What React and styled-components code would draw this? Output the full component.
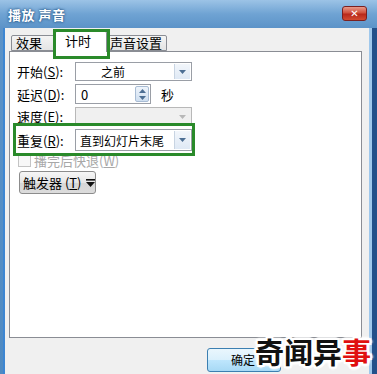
import React from "react"
import styled, { createGlobalStyle } from "styled-components"

const GlobalStyle = createGlobalStyle`
  html, body { margin: 0; padding: 0; }
  body {
    width: 377px;
    height: 374px;
    overflow: hidden;
    font-family: "Noto Sans CJK SC", "Noto Sans", sans-serif;
    font-size: 13px;
    line-height: 15px;
  }
`

const Window = styled.div`
  position: relative;
  width: 377px;
  height: 374px;
  display: flex;
  flex-direction: column;
  background: linear-gradient(180deg, #9cc3e6 0, #6fa3d3 14px, #5c93c8 28px, #4f8ac2 100%);
  overflow: hidden;
`

const TitleBar = styled.div`
  height: 28px;
  flex: none;
  display: flex;
  align-items: center;
  justify-content: space-between;
  padding: 0 10px 0 8px;
`

const Title = styled.span`
  color: #fff;
  font-weight: bold;
  font-size: 13px;
  letter-spacing: 0.5px;
  text-shadow: 0 0 3px #2b5a8a, 0 0 2px #2b5a8a;
`

const CloseButton = styled.div`
  width: 23px;
  height: 13px;
  border: 1px solid #7a2020;
  border-radius: 3px;
  background: linear-gradient(180deg, #e89a8a 0, #d0503c 45%, #b8281a 55%, #d24a30 100%);
  display: flex;
  align-items: center;
  justify-content: center;
  color: #fff;
  font: bold 10px "DejaVu Sans", sans-serif;
  line-height: 1;
  margin-top: -1px;
`

const Client = styled.div`
  flex: 1;
  display: flex;
  flex-direction: column;
  background: #f0f0f0;
  margin: 0 8px 0 5px;
  box-shadow: 3px 0 0 #9fc8ec, 8px 0 0 #23508a, -2px 0 0 #3d86d2;
  padding: 2px 7px 0 4px;
`

const TabRow = styled.div`
  height: 21px;
  flex: none;
  display: flex;
  align-items: flex-end;
  padding-left: 2px;
  position: relative;
  z-index: 2;
`

const Tab = styled.div`
  position: relative;
  box-sizing: border-box;
  height: ${p => (p.active ? "21px" : "16px")};
  padding: 0 ${p => (p.active ? "9px" : "4px")};
  margin: ${p => (p.active ? "0 -2px 0 0" : "0 0 0 0")};
  min-width: ${p => p.w}px;
  border: 1px solid #8a8d94;
  border-bottom: ${p => (p.active ? "none" : "1px solid #8a8d94")};
  border-radius: 2px 2px 0 0;
  background: ${p => (p.active ? "#fff" : "linear-gradient(180deg, #f4f4f4 0, #e4e4e4 100%)")};
  margin-bottom: ${p => (p.active ? "-1px" : "0")};
  font-size: 13px;
  line-height: ${p => (p.active ? "18px" : "14px")};
  color: #000;
  white-space: nowrap;
  z-index: ${p => (p.active ? 2 : 1)};

  ${p => p.active && `
    &::after {
      content: "";
      position: absolute;
      left: -3px;
      right: -4px;
      top: -3px;
      bottom: -7px;
      border: 3px solid #2a8a2a;
      pointer-events: none;
    }
  `}
`

const Panel = styled.div`
  box-sizing: border-box;
  height: 287px;
  flex: none;
  background: #fff;
  border: 1px solid #8a8d94;
  padding: 10px 0 0 7px;
  display: flex;
  flex-direction: column;
  align-items: flex-start;
  gap: 3px;
  position: relative;
  z-index: 1;
`

const Row = styled.div`
  position: relative;
  display: flex;
  align-items: center;
  height: ${p => p.h || 19}px;
  ${p => p.highlight && `
    &::after {
      content: "";
      position: absolute;
      left: -4px;
      right: -3px;
      top: -6px;
      bottom: -5px;
      border: 3px solid #2a8a2a;
      pointer-events: none;
      z-index: 3;
    }
  `}
`

const Label = styled.span`
  width: 58px;
  flex: none;
  color: #000;
  white-space: nowrap;
`

const Key = styled.u`
  text-decoration: underline;
`

const Combo = styled.div`
  box-sizing: border-box;
  width: 117px;
  height: ${p => p.h || 19}px;
  border: 1px solid ${p => (p.disabled ? "#b8b8b8" : "#9a9ea6")};
  background: ${p => (p.disabled ? "#f0f0f0" : "#fff")};
  display: flex;
  align-items: center;
  padding-left: ${p => p.pad || 4}px;
  position: relative;
  white-space: nowrap;
  font-size: 12px;
`

const ComboText = styled.span`
  flex: 1;
`

const DropBtn = styled.div`
  position: absolute;
  right: 1px;
  top: 1px;
  bottom: 1px;
  width: 15px;
  display: flex;
  align-items: center;
  justify-content: center;
  background: ${p => (p.disabled ? "transparent" : "linear-gradient(180deg, #f2f6fb 0, #dfe9f5 100%)")};
  border-left: 1px solid ${p => (p.disabled ? "transparent" : "#c8d4e2")};
`

const Arrow = ({ color = "#4d6f94", up }) => (
  <svg width="7" height="4" viewBox="0 0 7 4">
    <path d={up ? "M0 4 L3.5 0 L7 4Z" : "M0 0 L7 0 L3.5 4Z"} fill={color} />
  </svg>
)

const Spin = styled.div`
  box-sizing: border-box;
  width: 76px;
  height: 20px;
  border: 1px solid #9a9ea6;
  background: #fff;
  display: flex;
  align-items: center;
  padding-left: 5px;
  position: relative;
`

const SpinBtns = styled.div`
  position: absolute;
  right: 1px;
  top: 1px;
  bottom: 1px;
  width: 12px;
  display: flex;
  flex-direction: column;
  justify-content: space-around;
  align-items: center;
  border: 1px solid #a8bcd4;
  border-radius: 2px;
  background: linear-gradient(180deg, #eef4fb 0, #cfdff0 100%);
`

const Unit = styled.span`
  margin-left: 10px;
`

const CheckRow = styled.div`
  display: flex;
  align-items: center;
  height: 13px;
  gap: 3px;
  padding-left: 1px;
  color: #a8a8a8;
  white-space: nowrap;
`

const CheckBox = styled.span`
  box-sizing: border-box;
  width: 13px;
  height: 13px;
  border: 1px solid #c4c4c4;
  background: #f8f8f8;
`

const TriggerButton = styled.div`
  box-sizing: border-box;
  width: 77px;
  height: 23px;
  margin: 1px 0 0 2px;
  border: 1px solid #8c8c8c;
  border-radius: 3px;
  background: linear-gradient(180deg, #f6f6f6 0, #e6e6e6 50%, #d6d6d6 51%, #dcdcdc 100%);
  display: flex;
  align-items: center;
  gap: 4px;
  padding-left: 3px;
  white-space: nowrap;
`

const Footer = styled.div`
  flex: 1;
  display: flex;
  justify-content: flex-start;
  padding: 10px 0 0 198px;
`

const OkButton = styled.div`
  box-sizing: border-box;
  width: 74px;
  height: 24px;
  border: 1px solid #3c7fb1;
  border-radius: 3px;
  background: linear-gradient(180deg, #eaf6fd 0, #d9f0fc 50%, #bee6fd 51%, #a7d9f5 100%);
  font-size: 12px;
  line-height: 14px;
  padding: 4px 0 0 23px;
  white-space: nowrap;
`

const Watermark = styled.div`
  position: absolute;
  left: 253px;
  top: 333px;
  padding: 0 2px;
  font-size: 29px;
  font-weight: bold;
  line-height: 36px;
  color: #111;
  white-space: nowrap;
  text-shadow: 2px 0 0 #fff, -2px 0 0 #fff, 0 2px 0 #fff, 0 -2px 0 #fff,
    2px 2px 0 #fff, -2px -2px 0 #fff, 2px -2px 0 #fff, -2px 2px 0 #fff,
    3px 0 2px #fff, -3px 0 2px #fff, 0 3px 2px #fff, 0 -3px 2px #fff;
  z-index: 5;
`

const Red = styled.span`
  color: #e01010;
`

export default function App() {
  return (
    <Window>
      <GlobalStyle />
      <TitleBar>
        <Title>播放 声音</Title>
        <CloseButton>✕</CloseButton>
      </TitleBar>
      <Client>
        <TabRow>
          <Tab w={44}>效果</Tab>
          <Tab active w={52}>计时</Tab>
          <Tab w={55}>声音设置</Tab>
        </TabRow>
        <Panel>
          <Row>
            <Label>开始(<Key>S</Key>):</Label>
            <Combo pad={25}>
              <ComboText>之前</ComboText>
              <DropBtn><Arrow /></DropBtn>
            </Combo>
          </Row>
          <Row h={20}>
            <Label>延迟(<Key>D</Key>):</Label>
            <Spin>
              <ComboText>0</ComboText>
              <SpinBtns>
                <Arrow up />
                <Arrow />
              </SpinBtns>
            </Spin>
            <Unit>秒</Unit>
          </Row>
          <Row>
            <Label>速度(<Key>E</Key>):</Label>
            <Combo disabled>
              <ComboText />
              <DropBtn disabled><Arrow color="#b8b8b8" /></DropBtn>
            </Combo>
          </Row>
          <Row h={22} highlight>
            <Label>重复(<Key>R</Key>):</Label>
            <Combo h={22}>
              <ComboText>直到幻灯片末尾</ComboText>
              <DropBtn><Arrow /></DropBtn>
            </Combo>
          </Row>
          <CheckRow>
            <CheckBox />
            <span>播完后快退(<Key>W</Key>)</span>
          </CheckRow>
          <TriggerButton>
            <span>触发器 (<Key>T</Key>)</span>
            <svg width="9" height="8" viewBox="0 0 9 8">
              <rect x="0" y="0" width="9" height="1.6" fill="#111" />
              <path d="M0 3 L9 3 L4.5 8Z" fill="#111" />
            </svg>
          </TriggerButton>
        </Panel>
        <Footer>
          <OkButton>确定</OkButton>
        </Footer>
      </Client>
      <Watermark>奇闻异<Red>事</Red></Watermark>
    </Window>
  )
}
